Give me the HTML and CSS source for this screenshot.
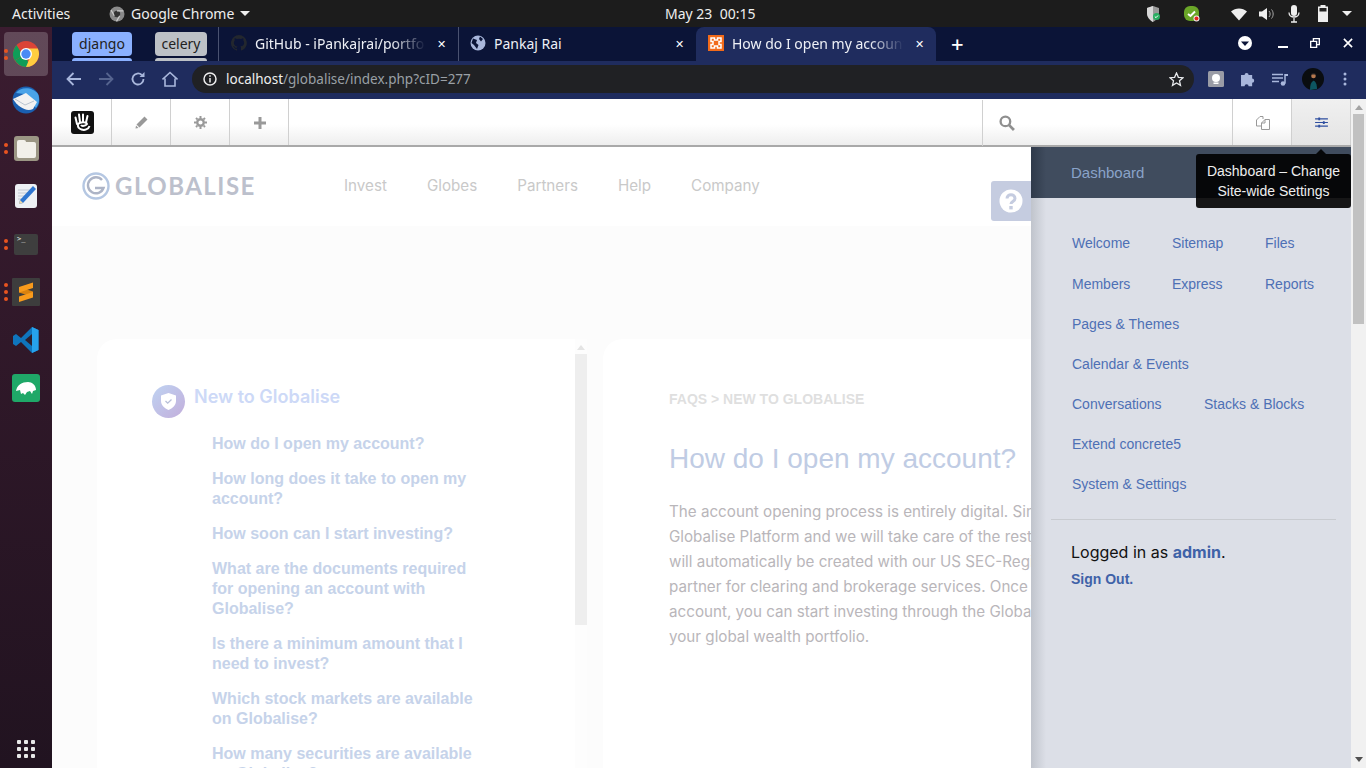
FILE: index.html
```html
<!DOCTYPE html>
<html lang="en">
<head>
  <meta charset="UTF-8" />
  <title>How do I open my account?</title>
  <link rel="stylesheet" href="styles.css">
</head>
<body>
  <!-- gnome top bar -->
  <header class="topbar">
    <div class="topbar-left">
      <span class="activities">Activities</span>
      <span class="app-name">
        <svg width="16" height="16" viewBox="0 0 16 16"><circle cx="8" cy="8" r="7.5" fill="#8a8a8a"/><circle cx="8" cy="8" r="3.2" fill="#333"/><path d="M8 4.8h6.4M5.3 9.8 2 4M10.7 9.8 7.5 15.4" stroke="#ccc" stroke-width="1.2"/></svg>
        Google Chrome
        <i class="caret"></i>
      </span>
    </div>
    <div class="clock">May 23&nbsp; 00:15</div>
    <div class="tray">
      <svg class="tray-shield" width="18" height="18" viewBox="0 0 18 18"><path d="M8 1 2 3v5c0 4 2.500 7 6 9 1-.5 2-1.200 2.800-2L14 8V3z" fill="#9a9a9a"/><path d="M8 1v16c-3.500-2-6-5-6-9V3z" fill="#d8d8d8"/><circle cx="11.500" cy="11.500" r="3.500" fill="#27ae60"/><path d="m9.800 11.500 1.200 1.200 2-2.200" stroke="#fff" fill="none"/></svg>
      <svg class="tray-check" width="18" height="18" viewBox="0 0 18 18"><rect x="1" y="1" width="15" height="15" rx="6" fill="#6aa628"/><path d="m5 9 2.500 2L12 6.500" stroke="#fff" stroke-width="2" fill="none"/><circle cx="13.500" cy="13.500" r="3" fill="#eee"/><circle cx="13.500" cy="13.500" r="2" fill="#e3261f"/></svg>
      <svg class="tray-wifi" width="16" height="14" viewBox="0 0 16 14"><path d="M0 4.500C4.500.5 11.500.5 16 4.500L8 13.500z" fill="#eee"/></svg>
      <svg class="tray-vol" width="16" height="14" viewBox="0 0 16 14"><path d="M0 4.500h3L8 1v12L3 9.500H0z" fill="#eee"/><path d="M10 4c1.500 1.500 1.500 4.500 0 6M12.500 2.500c2.200 2.500 2.200 6.500 0 9" stroke="#aaa" fill="none"/></svg>
      <svg class="tray-mic" width="12" height="18" viewBox="0 0 12 18"><rect x="3" y="0" width="6" height="11" rx="3" fill="#eee"/><path d="M1 7.500c0 6 10 6 10 0M6 13v4M3 17h6" stroke="#eee" stroke-width="1.300" fill="none"/></svg>
      <svg class="tray-batt" width="12" height="17" viewBox="0 0 12 17"><path d="M3.500 0h5v1.500H11V17H1V1.500h2.500z" fill="#eee"/><rect x="2.500" y="3" width="7" height="3.500" fill="#222"/></svg>
      <i class="caret tray-caret"></i>
    </div>
  </header>

  <div class="desktop">
    <!-- ubuntu dock -->
    <nav class="dock">
      <div class="dock-item is-running">
        <i class="pips"><b></b><b></b></i>
        <svg width="26" height="26" viewBox="0 0 26 26"><circle cx="13" cy="13" r="13" fill="#db4437"/><path d="M13 13 2 19.500A13 13 0 0 0 13 26c2 0 3-.3 3-.3z" fill="#0f9d58"/><path d="M13 13 1.700 19.500A13 13 0 0 1 3.500 4L9 13z" fill="#0f9d58"/><path d="M13 7.500h11.800A13 13 0 0 1 13 26L18 14z" fill="#ffcd40"/><circle cx="13" cy="13" r="6" fill="#fff"/><circle cx="13" cy="13" r="4.700" fill="#4a8af4"/></svg>
      </div>
      <div class="dock-item">
        <svg width="28" height="28" viewBox="0 0 28 28"><circle cx="14" cy="14" r="13.500" fill="#1a5fb0"/><path d="M4 7C8 1 20 0 26 8c2 5 1 10-2 14L12 8z" fill="#4aa3e8"/><path d="M1 13 14 7l11 9-4 7c-7 3-15-2-20-10z" fill="#f2f2f2"/><path d="m3 13 10 6 9-4" stroke="#b9c4d0" fill="none"/></svg>
      </div>
      <div class="dock-item">
        <i class="pips"><b></b><b></b></i>
        <div class="icon-files"><div class="folder"></div></div>
      </div>
      <div class="dock-item">
        <svg width="24" height="26" viewBox="0 0 24 26"><rect x="1" y="1" width="22" height="24" rx="3" fill="#eef0f4"/><path d="M4 7h12M4 10h10M4 13h8M4 16h6" stroke="#c3c8d2"/><path d="m19 3 3 3L9 20l-4 1 1-4z" fill="#2f75d0"/><path d="m6 17-1 4 4-1z" fill="#f0d9a8"/></svg>
      </div>
      <div class="dock-item">
        <i class="pips"><b></b><b></b></i>
        <div class="icon-term"><span>&gt;_</span></div>
      </div>
      <div class="dock-item">
        <i class="pips"><b></b><b></b><b></b></i>
        <svg width="28" height="28" viewBox="0 0 28 28"><rect width="28" height="28" rx="1" fill="#3d3d3d"/><path d="M7 9 21 13.500V19L7 14.500z" fill="#d9820f"/><path d="M7 9 21 4.500V10L7 14.500zM7 18.500 21 14V19.500L7 24z" fill="#f89b1c"/></svg>
      </div>
      <div class="dock-item">
        <svg width="26" height="26" viewBox="0 0 26 26"><path d="M19 0 25.500 3v20L19 26 8 15l-5 4-3-2V9l3-2 5 4z" fill="#0f75bd"/><path d="M19 0 25.500 3v20L19 26z" fill="#26a2ec"/><path d="M19 7v12l-7-6z" fill="#2c2030"/></svg>
      </div>
      <div class="dock-item">
        <svg width="28" height="28" viewBox="0 0 28 28"><rect width="28" height="28" rx="3" fill="#1fa868"/><path d="M4 17c1-6 6-9 12-9 4 0 8 3 8 8l-3 1-1 3-2-3-3 1-2 3-2-2-2 1-1-4c-1 0-3 1-4 1z" fill="#fff"/></svg>
      </div>
      <div class="dock-grid">
        <i></i><i></i><i></i><i></i><i></i><i></i><i></i><i></i><i></i>
      </div>
    </nav>

    <main class="window">
      <!-- tab strip -->
      <div class="tabstrip">
        <span class="group group-blue">django</span>
        <span class="group group-grey">celery</span>
        <div class="tab tab-github">
          <svg width="16" height="16" viewBox="0 0 16 16"><path fill="#23272e" d="M8 0a8 8 0 0 0-2.500 15.600c.4.100.5-.2.500-.4v-1.400c-2.200.5-2.700-1-2.700-1-.4-.9-.9-1.200-.9-1.200-.7-.5.100-.5.100-.5.800.1 1.200.8 1.200.8.700 1.200 1.900.9 2.300.7.100-.5.300-.9.500-1.100-1.800-.2-3.600-.9-3.600-4 0-.9.300-1.600.8-2.100-.1-.2-.4-1 .1-2.100 0 0 .7-.2 2.200.8a7.600 7.600 0 0 1 4 0c1.500-1 2.200-.8 2.200-.8.400 1.100.2 1.900.1 2.100.5.600.8 1.300.8 2.100 0 3.100-1.900 3.700-3.700 3.900.3.300.6.800.6 1.500v2.200c0 .2.100.5.600.4A8 8 0 0 0 8 0z"/></svg>
          <span class="tab-title">GitHub - iPankajrai/portfo</span>
          <span class="tab-x">✕</span>
        </div>
        <div class="tab tab-rai">
          <svg width="16" height="16" viewBox="0 0 16 16"><circle cx="8" cy="8" r="7.500" fill="#a9b7dc"/><path d="M3 3.500 7 5 6 8l2.500 2L7 14 4 10 1.500 8zM10 1.500 13 4l-2 2.500L9 4z" fill="#0b1437"/></svg>
          <span class="tab-title">Pankaj Rai</span>
          <span class="tab-x">✕</span>
        </div>
        <div class="tab tab-active">
          <svg width="16" height="16" viewBox="0 0 16 16"><rect width="16" height="16" fill="#f26a1a"/><path d="M3 3h3.500v2h3V3H13v3.500h-2v3h2V13H9.500v-2h-3v2H3V9.500h2v-3H3z" fill="none" stroke="#fff" stroke-width="1.500"/></svg>
          <span class="tab-title">How do I open my account</span>
          <span class="tab-x">✕</span>
        </div>
        <span class="new-tab">+</span>
        <div class="win-controls">
          <svg class="win-drop" width="14" height="14" viewBox="0 0 14 14"><circle cx="7" cy="7" r="7" fill="#fff"/><path d="M3 5.500h8L7 10z" fill="#0b1437"/></svg>
          <i class="win-min"></i>
          <svg class="win-max" width="10" height="10" viewBox="0 0 11 11"><path d="M3 0h8v8H8v3H0V3h3zm1.500 1.500v1.500H8v3.500h1.500v-5zM1.500 4.500v5h5v-5z" fill="#fff"/></svg>
          <svg class="win-close" width="10" height="10" viewBox="0 0 11 11"><path d="m1 1 9 9M10 1l-9 9" stroke="#fff" stroke-width="1.800"/></svg>
        </div>
      </div>

      <!-- address bar -->
      <div class="toolbar">
        <svg class="tb-icon" width="16" height="16" viewBox="0 0 16 16"><path d="M15 8H2M7.500 2 1.500 8l6 6" stroke="#a9b7dc" stroke-width="1.800" fill="none"/></svg>
        <svg class="tb-icon" width="16" height="16" viewBox="0 0 16 16"><path d="M1 8h13M8.500 2l6 6-6 6" stroke="#56648f" stroke-width="1.800" fill="none"/></svg>
        <svg class="tb-icon" width="16" height="16" viewBox="0 0 16 16"><path d="M13.500 8A5.500 5.500 0 1 1 11.800 4" stroke="#a9b7dc" stroke-width="1.800" fill="none"/><path d="M14.500 1v5h-5z" fill="#a9b7dc"/></svg>
        <svg class="tb-icon" width="16" height="16" viewBox="0 0 16 16"><path d="M3 7.500V15h10V7.500M.5 8.500 8 1.500l7.500 7" stroke="#a9b7dc" stroke-width="1.600" fill="none"/></svg>
        <div class="omnibox">
          <svg width="14" height="14" viewBox="0 0 14 14"><circle cx="7" cy="7" r="6" stroke="#eee" stroke-width="1.500" fill="none"/><path d="M7 6v4.500M7 3.300v1.500" stroke="#eee" stroke-width="1.500"/></svg>
          <span class="url"><b>localhost</b>/globalise/index.php?cID=277</span>
          <svg class="omni-star" width="15" height="15" viewBox="0 0 15 15"><path d="m7.500 1 1.900 4.300 4.600.4-3.500 3.100 1 4.600-4-2.400-4 2.400 1-4.600L1 5.700l4.600-.4z" stroke="#e8eaed" stroke-width="1.300" fill="none"/></svg>
        </div>
        <div class="extensions">
          <svg width="16" height="16" viewBox="0 0 16 16"><rect width="16" height="16" rx="1.500" fill="#9a9ca6"/><circle cx="8" cy="7" r="4" fill="#fff"/><rect x="5.500" y="11.500" width="5" height="1.500" fill="#fff"/></svg>
          <svg width="16" height="16" viewBox="0 0 15 15"><path d="M1 4h3.500a2 2 0 1 1 4 0H12v3.500a2 2 0 1 1 0 4V15H8.500a2 2 0 1 0-4 0H1z" transform="scale(.95)" fill="#a9b7dc"/></svg>
          <svg width="16" height="13" viewBox="0 0 16 13"><path d="M0 1.500h11M0 5h11M0 8.500h7" stroke="#a9b7dc" stroke-width="1.300"/><path d="M13 1v9.500" stroke="#a9b7dc" stroke-width="1.500"/><circle cx="11" cy="10.500" r="2.300" fill="#a9b7dc"/><path d="M13 1h3v2h-3z" fill="#a9b7dc"/></svg>
          <svg class="avatar" width="22" height="22" viewBox="0 0 22 22"><circle cx="11" cy="11" r="11" fill="#0a0d10"/><path d="M8 22c0-5 1-8 3-9s4 3 4 8z" fill="#0d5560"/><circle cx="11.500" cy="8" r="2.300" fill="#b5794e"/><path d="M9 6.500c1-2 4-2 5 0z" fill="#222"/></svg>
          <svg class="menu-dots" width="4" height="14" viewBox="0 0 4 14"><circle cx="2" cy="2" r="1.500" fill="#a9b7dc"/><circle cx="2" cy="7" r="1.500" fill="#a9b7dc"/><circle cx="2" cy="12" r="1.500" fill="#a9b7dc"/></svg>
        </div>
      </div>

      <div class="viewport">
        <div class="page">
          <!-- concrete5 toolbar -->
          <div class="c5bar">
            <div class="c5-btn c5-logo">
              <svg width="23" height="23" viewBox="0 0 23 23"><rect width="23" height="23" rx="3" fill="#111"/><path d="M6 13 4.500 6.500M9 11 8 3.500M12 11V3.500M15 11.500l1.500-6.500" stroke="#fff" stroke-width="2" stroke-linecap="round"/><path d="M18.500 15c-1 3.500-5 4.500-8 3.500-3-1-4-3-3.500-5.500 2-2 8-2.500 9 0-1.500 2-5 2.500-6 1" stroke="#fff" stroke-width="2" fill="none"/></svg>
            </div>
            <div class="c5-btn">
              <svg width="13" height="13" viewBox="0 0 13 13"><path d="M9.500.5 12.500 3.500 4.500 11.500 1.500 8.500zM1 9.500 3.500 12 .5 12.500z" fill="#999"/></svg>
            </div>
            <div class="c5-btn">
              <svg width="13" height="13" viewBox="0 0 13 13"><circle cx="6.500" cy="6.500" r="3.300" stroke="#999" stroke-width="2.400" fill="none"/><path d="M6.500 0v13M0 6.500h13M2 2l9 9M11 2l-9 9" stroke="#999" stroke-width="2" stroke-dasharray="2 9"/></svg>
            </div>
            <div class="c5-btn">
              <svg width="12" height="12" viewBox="0 0 12 12"><path d="M6 0v12M0 6h12" stroke="#999" stroke-width="3"/></svg>
            </div>
            <div class="c5-search">
              <svg width="16" height="16" viewBox="0 0 15 15"><circle cx="6" cy="6" r="4.500" stroke="#8f8f8f" stroke-width="2.200" fill="none"/><path d="m9.500 9.500 4.500 4.500" stroke="#8f8f8f" stroke-width="2.600"/></svg>
            </div>
            <div class="c5-btn c5-btn-left">
              <svg width="14" height="14" viewBox="0 0 14 14"><path d="M5 10H.5V4L4 .5h3V3M5.500 13.500V7L9 3.500h4.500v10zM9 3.500V7H5.500" stroke="#999" fill="none"/></svg>
            </div>
            <div class="c5-btn c5-btn-active">
              <svg width="13" height="11" viewBox="0 0 14 12"><path d="M0 2h14M0 6h14M0 10h14" stroke="#2f4fa0" stroke-width="1.200"/><path d="M3.500.5h2v3h-2zM8.500 4.500h2v3h-2zM3.500 8.500h2v3h-2z" fill="#2f4fa0"/></svg>
            </div>
          </div>

          <div class="site">
            <div class="site-header">
              <div class="site-logo">
                <svg width="28" height="28" viewBox="0 0 28 28"><circle cx="14" cy="14" r="12.500" stroke="#b5c7e2" stroke-width="2.400" fill="none"/><path d="M20 8a8 8 0 1 0 1.500 8H13" stroke="#adb4c6" stroke-width="2.400" fill="none"/></svg>
                <span>GLOBALISE</span>
              </div>
              <ul class="site-nav">
                <li>Invest</li>
                <li>Globes</li>
                <li>Partners</li>
                <li>Help</li>
                <li>Company</li>
              </ul>
            </div>
            <div class="site-main">
              <section class="faq-side">
                <h3 class="faq-cat">
                  <span class="faq-badge">
                    <svg width="15" height="17" viewBox="0 0 15 17"><path d="M7.500 0 15 2.500V8c0 4-3.500 7.500-7.500 9C3.500 15.500 0 12 0 8V2.500z" fill="#fff"/><path d="m4.500 8 2.200 2.200L10.500 6.500" stroke="#b7bfd8" stroke-width="1.300" fill="none"/></svg>
                  </span>
                  <span class="faq-cat-name">New to Globalise</span>
                </h3>
                <ul class="faq-list">
                  <li>How do I open my account?</li>
                  <li>How long does it take to open my account?</li>
                  <li>How soon can I start investing?</li>
                  <li>What are the documents required for opening an account with Globalise?</li>
                  <li>Is there a minimum amount that I need to invest?</li>
                  <li>Which stock markets are available on Globalise?</li>
                  <li>How many securities are available on Globalise?</li>
                </ul>
              </section>
              <div class="faq-scroll">
                <i class="faq-scroll-up"></i>
                <i class="faq-scroll-thumb"></i>
              </div>
              <article class="faq-body">
                <div class="crumb">FAQS &gt; NEW TO GLOBALISE</div>
                <h1>How do I open my account?</h1>
                <p>The account opening process is entirely digital. Simply<br>
                Globalise Platform and we will take care of the rest.<br>
                will automatically be created with our US SEC-Registered<br>
                partner for clearing and brokerage services. Once you<br>
                account, you can start investing through the Globalise<br>
                your global wealth portfolio.</p>
              </article>
            </div>
          </div>

          <!-- dashboard panel, sits over the site -->
          <aside class="panel">
            <div class="help-tab">
              <svg width="24" height="24" viewBox="0 0 24 24"><circle cx="12" cy="12" r="11.500" fill="#fff"/><path d="M8 9.500c0-5 8-5 8 0 0 3-4 3-4 5.500" stroke="#c5cce0" stroke-width="3" fill="none"/><rect x="10.300" y="17" width="3.400" height="3.400" fill="#c5cce0"/></svg>
            </div>
            <div class="panel-head">Dashboard</div>
            <div class="panel-menu">
              <div class="menu-row row-first"><a class="col-a">Welcome</a><a class="col-b">Sitemap</a><a>Files</a></div>
              <div class="menu-row row-second"><a class="col-a">Members</a><a class="col-b">Express</a><a>Reports</a></div>
              <div class="menu-row"><a>Pages &amp; Themes</a></div>
              <div class="menu-row"><a>Calendar &amp; Events</a></div>
              <div class="menu-row"><a class="col-wide">Conversations</a><a>Stacks &amp; Blocks</a></div>
              <div class="menu-row"><a>Extend concrete5</a></div>
              <div class="menu-row"><a>System &amp; Settings</a></div>
            </div>
            <div class="panel-user">
              <div class="logged">Logged in as <a>admin</a>.</div>
              <a class="signout">Sign Out.</a>
            </div>
          </aside>

          <div class="tooltip">Dashboard – Change<br>Site-wide Settings</div>
        </div>

        <div class="scrollbar">
          <i class="arrow-up"></i>
          <i class="thumb"></i>
          <i class="arrow-down"></i>
        </div>
      </div>
    </main>
  </div>
</body>
</html>
```

FILE: styles.css
```css
* {
  box-sizing: border-box;
}
html, body {
  margin: 0;
  height: 768px;
  overflow: hidden;
}
body {
  font-family: "Liberation Sans", Arial, sans-serif;
  display: flex;
  flex-direction: column;
  background: #fff;
}
svg {
  display: block;
  flex: none;
}
i {
  display: block;
}

/* top bar */
.topbar {
  height: 27px;
  background: #1c1c1c;
  color: #eee;
  font-family: "Noto Sans", sans-serif;
  font-size: 14px;
  display: flex;
  align-items: center;
  padding-left: 12px;
}
.topbar-left {
  width: 653px;
  display: flex;
  align-items: center;
}
.activities {
  width: 97px;
}
.app-name {
  display: flex;
  align-items: center;
  gap: 6px;
}
.caret {
  width: 0;
  height: 0;
  border-left: 5px solid transparent;
  border-right: 5px solid transparent;
  border-top: 5px solid #eee;
}
.clock {
  font-size: 14px;
}
.tray {
  flex: 1;
  display: flex;
  align-items: center;
  justify-content: flex-end;
  height: 27px;
}
.tray-shield {
  margin-right: 20px;
}
.tray-check {
  margin-right: 30px;
}
.tray-wifi {
  margin-right: 12px;
}
.tray-vol {
  margin-right: 13px;
}
.tray-mic {
  margin-right: 17px;
}
.tray-batt {
  margin-right: 13px;
}
.tray-caret {
  margin-right: 14px;
}

/* dock */
.desktop {
  flex: 1;
  display: flex;
  min-height: 0;
}
.dock {
  width: 52px;
  flex: none;
  padding: 3px 0 10px;
  display: flex;
  flex-direction: column;
  background: linear-gradient(#3b1c30, #211320);
}
.dock-item {
  position: relative;
  height: 48px;
  display: flex;
  align-items: center;
  justify-content: center;
}
.is-running {
  margin: 2px 4px 0;
  border-radius: 4px;
  background: rgba(255, 255, 255, .2);
  height: 44px;
}
.pips {
  position: absolute;
  left: 4px;
  top: 0;
  bottom: 0;
  display: flex;
  flex-direction: column;
  justify-content: center;
  gap: 3px;
}
.is-running .pips {
  left: 0;
}
.pips b {
  width: 4px;
  height: 4px;
  border-radius: 50%;
  background: #e95420;
}
.icon-files {
  width: 25px;
  height: 25px;
  border-radius: 3px;
  background: #9b9684;
  padding: 6px 3px 3px;
}
.folder {
  position: relative;
  height: 100%;
  border-radius: 0 2px 2px 2px;
  background: #f2f0ea;
}
.folder::before {
  content: "";
  position: absolute;
  top: -2px;
  left: 0;
  width: 9px;
  height: 3px;
  border-radius: 2px 2px 0 0;
  background: #f2f0ea;
}
.icon-term {
  width: 24px;
  height: 21px;
  border-radius: 2px;
  background: #3e3e3e;
  color: #eee;
  font-family: "DejaVu Sans Mono", monospace;
  font-size: 7px;
  padding: 1px 3px;
}
.dock-grid {
  margin-top: auto;
  width: 18px;
  align-self: center;
  display: grid;
  grid-template-columns: repeat(3, 4px);
  gap: 3px;
}
.dock-grid i {
  width: 4px;
  height: 4px;
  background: #e8e8e8;
  border-radius: 1px;
}

/* browser */
.window {
  flex: 1;
  min-width: 0;
  display: flex;
  flex-direction: column;
}
.tabstrip {
  height: 34px;
  flex: none;
  background: #0b1437;
  color: #eef0f6;
  font-family: "Noto Sans", sans-serif;
  font-size: 14px;
  display: flex;
  align-items: flex-end;
  padding-left: 20px;
}
.group {
  position: relative;
  height: 24px;
  align-self: flex-start;
  margin-top: 5px;
  border-radius: 4px;
  text-align: center;
  line-height: 23px;
  color: #222;
}
.group::after {
  content: "";
  position: absolute;
  left: 0;
  right: 0;
  top: 26px;
  height: 3px;
  border-radius: 3px 3px 0 0;
  background: inherit;
}
.group-blue {
  width: 60px;
  background: #8ab0ff;
  margin-right: 23px;
}
.group-grey {
  width: 52px;
  background: #bdc1c6;
  margin-right: 11px;
}
.tab {
  height: 34px;
  display: flex;
  align-items: center;
  padding: 0 10px 2px 12px;
  gap: 8px;
  position: relative;
}
.tab-github {
  width: 240px;
  border-left: 1px solid #4a5270;
}
.tab-rai {
  width: 238px;
  padding-left: 11px;
  border-left: 1px solid #4a5270;
}
.tab-active {
  width: 240px;
  background: #1f2c5e;
  border-radius: 8px 8px 0 0;
}
.tab-title {
  flex: 1;
  min-width: 0;
  white-space: nowrap;
  overflow: hidden;
  -webkit-mask-image: linear-gradient(to right, #000 80%, transparent);
  mask-image: linear-gradient(to right, #000 80%, transparent);
}
.tab-rai .tab-title {
  -webkit-mask-image: none;
  mask-image: none;
}
.tab-x {
  font-size: 11px;
  width: 14px;
  text-align: center;
  color: #fff;
}
.new-tab {
  font-size: 22px;
  line-height: 32px;
  height: 34px;
  margin-left: 15px;
  color: #fff;
  font-weight: 500;
}
.win-controls {
  margin-left: auto;
  height: 34px;
  padding: 0 13px 2px 0;
  display: flex;
  align-items: center;
}
.win-min {
  width: 10px;
  height: 2px;
  margin: 7px 22px 0 26px;
  background: #fff;
}
.win-close {
  margin-left: 23px;
}
.toolbar {
  height: 38px;
  flex: none;
  background: #1f2c5e;
  display: flex;
  align-items: center;
  padding: 0 0 2px 14px;
}
.tb-icon {
  margin-right: 16px;
}
.toolbar .tb-icon:nth-child(4) {
  margin-right: 14px;
}
.omnibox {
  width: 1002px;
  height: 28px;
  border-radius: 14px;
  background: #202124;
  display: flex;
  align-items: center;
  padding: 0 10px 0 11px;
  gap: 9px;
  font-family: "Noto Sans", sans-serif;
  font-size: 13.5px;
  color: #9aa0a6;
}
.url b {
  font-weight: 400;
  color: #eee;
}
.omni-star {
  margin-left: auto;
}
.extensions {
  flex: 1;
  display: flex;
  align-items: center;
  gap: 16px;
  padding-left: 14px;
}
.avatar {
  margin-left: -2px;
}
.menu-dots {
  margin-left: 3px;
}

/* page area */
.viewport {
  flex: 1;
  min-height: 0;
  display: flex;
}
.page {
  position: relative;
  flex: 1;
  min-width: 0;
  display: flex;
  flex-direction: column;
  overflow: hidden;
}
.c5bar {
  height: 48px;
  flex: none;
  display: flex;
  background: linear-gradient(#fff 55%, #eeeeee);
  border-bottom: 2px solid #a9a9a9;
}
.c5-btn {
  width: 59px;
  display: flex;
  align-items: center;
  justify-content: center;
  padding: 1px 0 0 1px;
  border-right: 1px solid #d0d0d0;
}
.c5-logo {
  width: 60px;
}
.c5-search {
  flex: 1;
  padding: 1px 0 0 16px;
  display: flex;
  align-items: center;
  margin-right: -1px;
}
.c5-search::before {
  content: "";
  width: 1px;
  height: 46px;
  margin-left: 677px;
  margin-right: 16px;
  background: #d0d0d0;
}
.c5-btn-left {
  border-left: 1px solid #d0d0d0;
  width: 60px;
}
.c5-btn-active {
  background: linear-gradient(#f0f0f0, #e4e4e4);
}
.site {
  flex: 1;
  min-height: 0;
  overflow: hidden;
  background: #fcfcfc;
}
.site-header {
  height: 79px;
  background: #fff;
  display: flex;
  align-items: center;
  padding: 0 0 2px 30px;
}
.site-logo {
  display: flex;
  align-items: center;
  gap: 5px;
  width: 262px;
  font-family: Lato, sans-serif;
  font-size: 24px;
  font-weight: 700;
  letter-spacing: 1.5px;
  color: #bcc0cc;
}
.site-nav {
  display: flex;
  gap: 40px;
  margin: 0;
  padding: 0;
  list-style: none;
  font-family: Inter, sans-serif;
  font-size: 15.2px;
  color: #c9c9c9;
}
.site-main {
  display: flex;
  padding: 113px 320px 0 45px;
  height: 100%;
}
.faq-side {
  width: 478px;
  flex: none;
  background: #fff;
  border-radius: 20px 0 0 0;
  padding: 46px 0 0 55px;
}
.faq-cat {
  display: flex;
  margin: 0 0 16px;
}
.faq-badge {
  width: 33px;
  height: 33px;
  border-radius: 50%;
  background: linear-gradient(135deg, #bfd3f2, #c2aedb);
  display: flex;
  align-items: center;
  justify-content: center;
}
.faq-cat-name {
  margin: 0 0 0 9px;
  font-family: Inter, sans-serif;
  font-size: 18px;
  font-weight: 600;
  line-height: 24px;
  color: #cdd9f7;
}
.faq-list {
  margin: 0;
  padding: 0 0 0 60px;
  width: 325px;
  list-style: none;
  font-size: 16px;
  font-weight: 700;
  line-height: 20px;
  color: #c6d3ea;
}
.faq-list li {
  margin-bottom: 15px;
}
.faq-scroll {
  width: 12px;
  flex: none;
  background: #fdfdfd;
  margin-right: 16px;
}
.faq-scroll-up {
  width: 0;
  margin: 6px auto 4px;
  border-left: 4px solid transparent;
  border-right: 4px solid transparent;
  border-bottom: 5px solid #e4e4e4;
}
.faq-scroll-thumb {
  height: 271px;
  background: #eeeeee;
}
.faq-body {
  flex: 1;
  min-width: 0;
  overflow: hidden;
  background: #fff;
  border-radius: 20px 0 0 0;
  padding: 50px 0 0 66px;
}
.crumb {
  font-size: 14px;
  font-weight: 700;
  line-height: 20px;
  color: #dfdfdf;
}
.faq-body h1 {
  margin: 34px 0 0;
  font-size: 28px;
  font-weight: 400;
  line-height: 32px;
  color: #c0cce4;
}
.faq-body p {
  margin: 24px 0 0;
  white-space: nowrap;
  font-family: Inter, sans-serif;
  font-size: 15.2px;
  line-height: 25px;
  color: #b9b6ba;
}

/* dashboard panel */
.panel {
  position: absolute;
  top: 48px;
  right: 0;
  bottom: 0;
  width: 320px;
  background: #dcdfe7;
}
.panel::before {
  content: "";
  position: absolute;
  top: 0;
  left: 0;
  bottom: 0;
  width: 15px;
  background: linear-gradient(to right, #c0c4cc, #dcdfe7);
}
.panel-head {
  position: relative;
  height: 51px;
  padding-left: 40px;
  line-height: 52px;
  font-size: 15px;
  color: #8aa3c9;
  background: linear-gradient(to right, #2f3a4a, #404c5e 15px);
}
.panel-menu {
  position: relative;
  padding: 25px 0 0 41px;
  font-size: 14px;
  color: #4e70b5;
}
.menu-row {
  height: 40px;
  line-height: 40px;
  display: flex;
}
.row-first {
  height: 41px;
}
.menu-row a {
  display: block;
}
.col-a {
  width: 100px;
}
.col-b {
  width: 93px;
}
.col-wide {
  width: 132px;
}
.panel-user {
  position: relative;
  margin: 15px 15px 0 20px;
  padding: 20px 0 0 20px;
  border-top: 1px solid #c8cbd0;
}
.logged {
  font-family: Inter, sans-serif;
  font-size: 16px;
  line-height: 24px;
  color: #111;
}
.logged a {
  font-weight: 700;
  color: #3f62a8;
}
.signout {
  display: block;
  margin-top: 5px;
  font-size: 14px;
  font-weight: 700;
  line-height: 20px;
  color: #3f62a8;
}
.help-tab {
  position: absolute;
  left: -40px;
  top: 34px;
  width: 40px;
  height: 40px;
  border-radius: 3px 0 0 3px;
  background: #c5cce0;
  display: flex;
  align-items: center;
  justify-content: center;
}
.tooltip {
  position: absolute;
  top: 55px;
  right: 0;
  width: 155px;
  height: 54px;
  border-radius: 3px;
  padding-top: 7px;
  background: rgba(0, 0, 0, .9);
  color: #eee;
  font-size: 14px;
  line-height: 20px;
  text-align: center;
}
.tooltip::before {
  content: "";
  position: absolute;
  top: -5px;
  right: 25px;
  border-left: 5px solid transparent;
  border-right: 5px solid transparent;
  border-bottom: 5px solid rgba(0, 0, 0, .9);
}

/* page scrollbar */
.scrollbar {
  width: 15px;
  flex: none;
  background: #f1f1f1;
  display: flex;
  flex-direction: column;
  align-items: center;
}
.arrow-up {
  margin: 6px 0 4px;
  border-left: 4px solid transparent;
  border-right: 4px solid transparent;
  border-bottom: 5px solid #a3a3a3;
}
.thumb {
  width: 11px;
  height: 210px;
  background: #c1c1c1;
}
.arrow-down {
  margin-top: auto;
  margin-bottom: 6px;
  border-left: 4px solid transparent;
  border-right: 4px solid transparent;
  border-top: 5px solid #505050;
}
```
